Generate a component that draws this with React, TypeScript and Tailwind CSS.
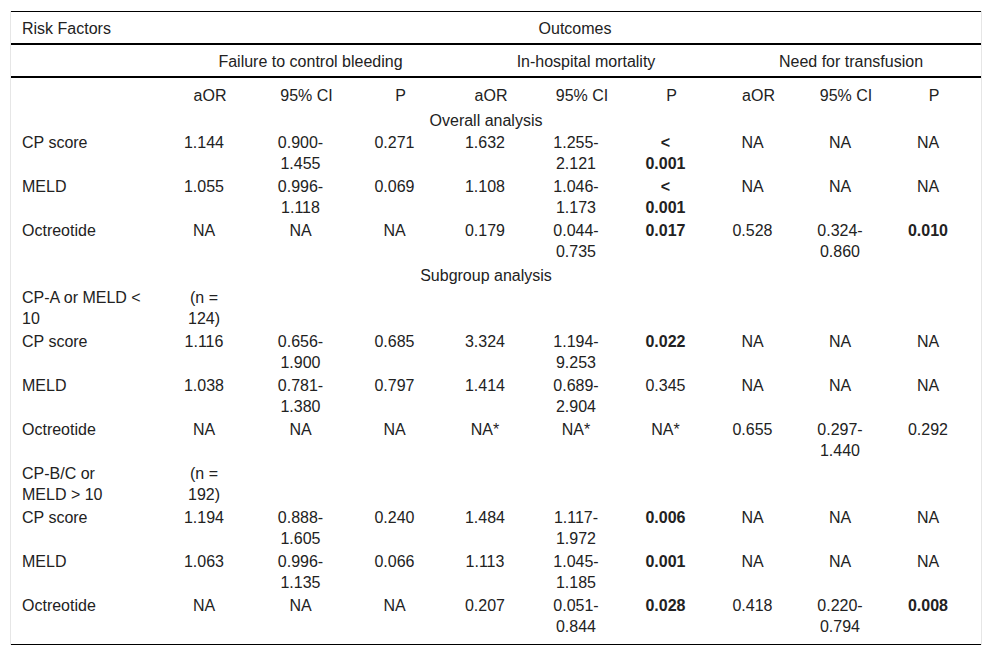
import React from "react";

type Cell = { t: React.ReactNode; b?: boolean };
type Row = { label: React.ReactNode; cells: Cell[]; last?: boolean };

const V = (t: React.ReactNode, b = false): Cell => ({ t, b });
const CI = (a: string, b: string) => (
  <>
    {a}
    <br />
    {b}
  </>
);
const LT = (
  <>
    &lt;
    <br />
    0.001
  </>
);

const overall: Row[] = [
  {
    label: "CP score",
    cells: [V("1.144"), V(CI("0.900-", "1.455")), V("0.271"), V("1.632"), V(CI("1.255-", "2.121")), V(LT, true), V("NA"), V("NA"), V("NA")],
  },
  {
    label: "MELD",
    cells: [V("1.055"), V(CI("0.996-", "1.118")), V("0.069"), V("1.108"), V(CI("1.046-", "1.173")), V(LT, true), V("NA"), V("NA"), V("NA")],
  },
  {
    label: "Octreotide",
    cells: [V("NA"), V("NA"), V("NA"), V("0.179"), V(CI("0.044-", "0.735")), V("0.017", true), V("0.528"), V(CI("0.324-", "0.860")), V("0.010", true)],
  },
];

const sub: Row[] = [
  {
    label: CI("CP-A or MELD <", "10"),
    cells: [V(CI("(n =", "124)")), V(""), V(""), V(""), V(""), V(""), V(""), V(""), V("")],
  },
  {
    label: "CP score",
    cells: [V("1.116"), V(CI("0.656-", "1.900")), V("0.685"), V("3.324"), V(CI("1.194-", "9.253")), V("0.022", true), V("NA"), V("NA"), V("NA")],
  },
  {
    label: "MELD",
    cells: [V("1.038"), V(CI("0.781-", "1.380")), V("0.797"), V("1.414"), V(CI("0.689-", "2.904")), V("0.345"), V("NA"), V("NA"), V("NA")],
  },
  {
    label: "Octreotide",
    cells: [V("NA"), V("NA"), V("NA"), V("NA*"), V("NA*"), V("NA*"), V("0.655"), V(CI("0.297-", "1.440")), V("0.292")],
  },
  {
    label: CI("CP-B/C or", "MELD > 10"),
    cells: [V(CI("(n =", "192)")), V(""), V(""), V(""), V(""), V(""), V(""), V(""), V("")],
  },
  {
    label: "CP score",
    cells: [V("1.194"), V(CI("0.888-", "1.605")), V("0.240"), V("1.484"), V(CI("1.117-", "1.972")), V("0.006", true), V("NA"), V("NA"), V("NA")],
  },
  {
    label: "MELD",
    cells: [V("1.063"), V(CI("0.996-", "1.135")), V("0.066"), V("1.113"), V(CI("1.045-", "1.185")), V("0.001", true), V("NA"), V("NA"), V("NA")],
  },
  {
    label: "Octreotide",
    cells: [V("NA"), V("NA"), V("NA"), V("0.207"), V(CI("0.051-", "0.844")), V("0.028", true), V("0.418"), V(CI("0.220-", "0.794")), V("0.008", true)],
    last: true,
  },
];

function DataRow({ r }: { r: Row }) {
  const pad = r.last ? "pt-px pb-[7px] border-b border-black" : "py-px";
  return (
    <tr>
      <td className={`${pad} pl-[11px] pr-1 text-left align-top`}>{r.label}</td>
      {r.cells.map((c, i) => (
        <td
          key={i}
          className={`${pad} align-top text-center ${i === 8 ? "pr-[9px]" : ""} ${c.b ? "font-bold" : ""}`}
        >
          {c.t}
        </td>
      ))}
    </tr>
  );
}

function SpanRow({ text }: { text: string }) {
  return (
    <tr>
      <td colSpan={10} className="pt-[2px] pb-0 pr-[20px] text-center align-top">
        {text}
      </td>
    </tr>
  );
}

export default function App() {
  const subHeads = ["aOR", "95% CI", "P", "aOR", "95% CI", "P", "aOR", "95% CI", "P"];
  return (
    <div className="w-[992px] h-[656px] bg-white pt-[11px] font-['Liberation_Sans',Arial,sans-serif] text-[16px] leading-[21px] text-[#222]">
      <div className="ml-[10px] w-[972px] border-x border-[#e6e6e6]">
        <table className="w-[970px] table-fixed border-separate border-spacing-0">
          <colgroup>
            <col className="w-[145px]" />
            <col className="w-[96px]" />
            <col className="w-[97px]" />
            <col className="w-[91px]" />
            <col className="w-[90px]" />
            <col className="w-[92px]" />
            <col className="w-[87px]" />
            <col className="w-[87px]" />
            <col className="w-[88px]" />
            <col className="w-[97px]" />
          </colgroup>
          <thead>
            <tr>
              <th className="border-t border-b-2 border-black pt-[6px] pb-[4px] pl-[11px] text-left font-normal">
                Risk Factors
              </th>
              <th colSpan={9} className="border-t border-b-2 border-black pt-[6px] pb-[4px] pl-[13px] text-center font-normal">
                Outcomes
              </th>
            </tr>
            <tr>
              <th className="border-b-2 border-black pt-[6px] pb-[4px]" />
              <th colSpan={3} className="border-b-2 border-black pt-[6px] pb-[4px] pl-[25px] text-center font-normal">
                Failure to control bleeding
              </th>
              <th colSpan={3} className="border-b-2 border-black pt-[6px] pb-[4px] pl-[23px] text-center font-normal">
                In-hospital mortality
              </th>
              <th colSpan={3} className="border-b-2 border-black pt-[6px] pb-[4px] pl-[12px] text-center font-normal">
                Need for transfusion
              </th>
            </tr>
            <tr>
              <th className="pt-[7px] pb-[2px]" />
              {subHeads.map((h, i) => (
                <th
                  key={i}
                  className={`pt-[7px] pb-[2px] pl-[12px] text-center font-normal ${i === 8 ? "pr-[9px]" : ""}`}
                >
                  {h}
                </th>
              ))}
            </tr>
          </thead>
          <tbody>
            <SpanRow text="Overall analysis" />
            {overall.map((r, i) => (
              <DataRow key={i} r={r} />
            ))}
            <SpanRow text="Subgroup analysis" />
            {sub.map((r, i) => (
              <DataRow key={i} r={r} />
            ))}
          </tbody>
        </table>
      </div>
    </div>
  );
}
